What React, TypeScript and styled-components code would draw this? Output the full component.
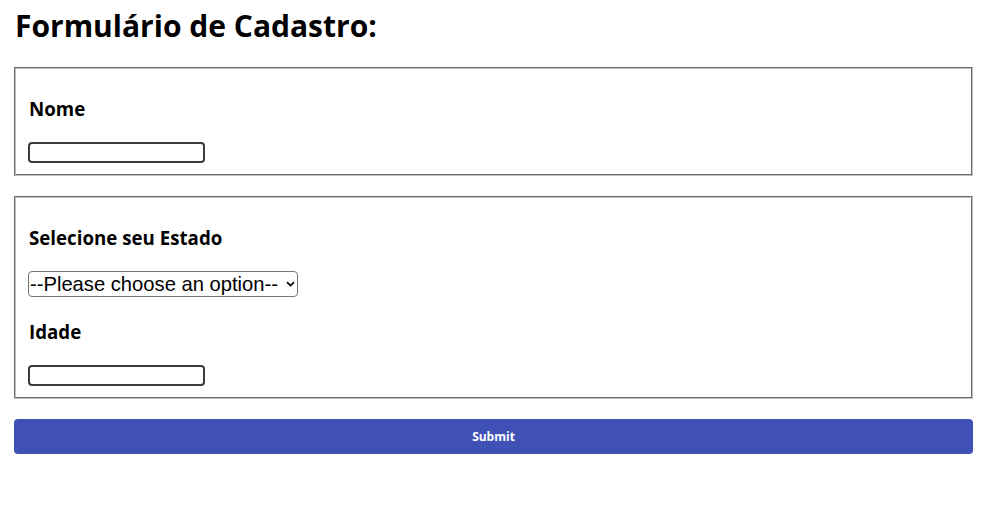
import React from "react";
import styled, { createGlobalStyle } from "styled-components";

const GlobalStyle = createGlobalStyle`
  body {
    margin: 0;
    background: #fff;
    font-family: "Open Sans", "Noto Sans", sans-serif;
    color: #000;
  }
`;

const Page = styled.div`
  width: 959px;
  padding: 6px 0 0 14px;
`;

const Title = styled.h1`
  margin: 0 0 21px 1px;
  font-size: 30px;
  line-height: 40px;
  font-weight: 700;
`;

const Fieldset = styled.fieldset`
  margin: 0 0 20px;
  padding: 29px 12px 11px;
  border: 2px groove rgb(192, 192, 192);
  min-width: 0;
`;

const Group = styled.div`
  & + & {
    margin-top: 24px;
  }
`;

const Label = styled.label`
  display: block;
  margin: 0 0 22px 1px;
  font-size: 18.72px;
  line-height: 22px;
  font-weight: 700;
`;

const TextInput = styled.input`
  display: block;
  box-sizing: border-box;
  width: 177px;
  height: 21px;
  margin: 0;
  padding: 1px 4px;
  border: 2px solid #3b3b3b;
  border-radius: 4px;
  background: #fff;
  font: 13px "Liberation Sans", Arial, sans-serif;
`;

const SelectWrap = styled.div`
  position: relative;
  width: 270px;
  height: 26px;
`;

const Select = styled.select`
  appearance: none;
  box-sizing: border-box;
  width: 100%;
  height: 100%;
  margin: 0;
  padding: 0 0 1px 1px;
  border: 1px solid #767676;
  border-radius: 4px;
  background: #fff;
  color: #000;
  font: 20.2px "Liberation Sans", Arial, sans-serif;
`;

const Chevron = styled.svg`
  position: absolute;
  right: 3px;
  top: 10px;
  width: 9px;
  height: 6px;
  pointer-events: none;
`;

const SubmitButton = styled.button`
  display: block;
  width: 100%;
  height: 35px;
  margin-top: 1px;
  border: none;
  border-radius: 4px;
  background: #3f51b5;
  color: #fff;
  font-family: "Open Sans", "Noto Sans", sans-serif;
  font-size: 12px;
  font-weight: 700;
  cursor: pointer;
`;

export default function App() {
  return (
    <>
      <GlobalStyle />
      <Page>
        <Title>Formulário de Cadastro:</Title>
        <form onSubmit={(e) => e.preventDefault()}>
          <Fieldset>
            <Group>
              <Label htmlFor="nome">Nome</Label>
              <TextInput id="nome" type="text" />
            </Group>
          </Fieldset>
          <Fieldset>
            <Group>
              <Label htmlFor="estado">Selecione seu Estado</Label>
              <SelectWrap>
                <Select id="estado" defaultValue="">
                  <option value="">--Please choose an option--</option>
                  <option value="SP">São Paulo</option>
                  <option value="RJ">Rio de Janeiro</option>
                  <option value="MG">Minas Gerais</option>
                </Select>
                <Chevron viewBox="0 0 9 6">
                  <path d="M1 1.2 L4.5 4.6 L8 1.2" fill="none" stroke="#000" strokeWidth="1.7" />
                </Chevron>
              </SelectWrap>
            </Group>
            <Group>
              <Label htmlFor="idade">Idade</Label>
              <TextInput id="idade" type="text" />
            </Group>
          </Fieldset>
          <SubmitButton type="submit">Submit</SubmitButton>
        </form>
      </Page>
    </>
  );
}
